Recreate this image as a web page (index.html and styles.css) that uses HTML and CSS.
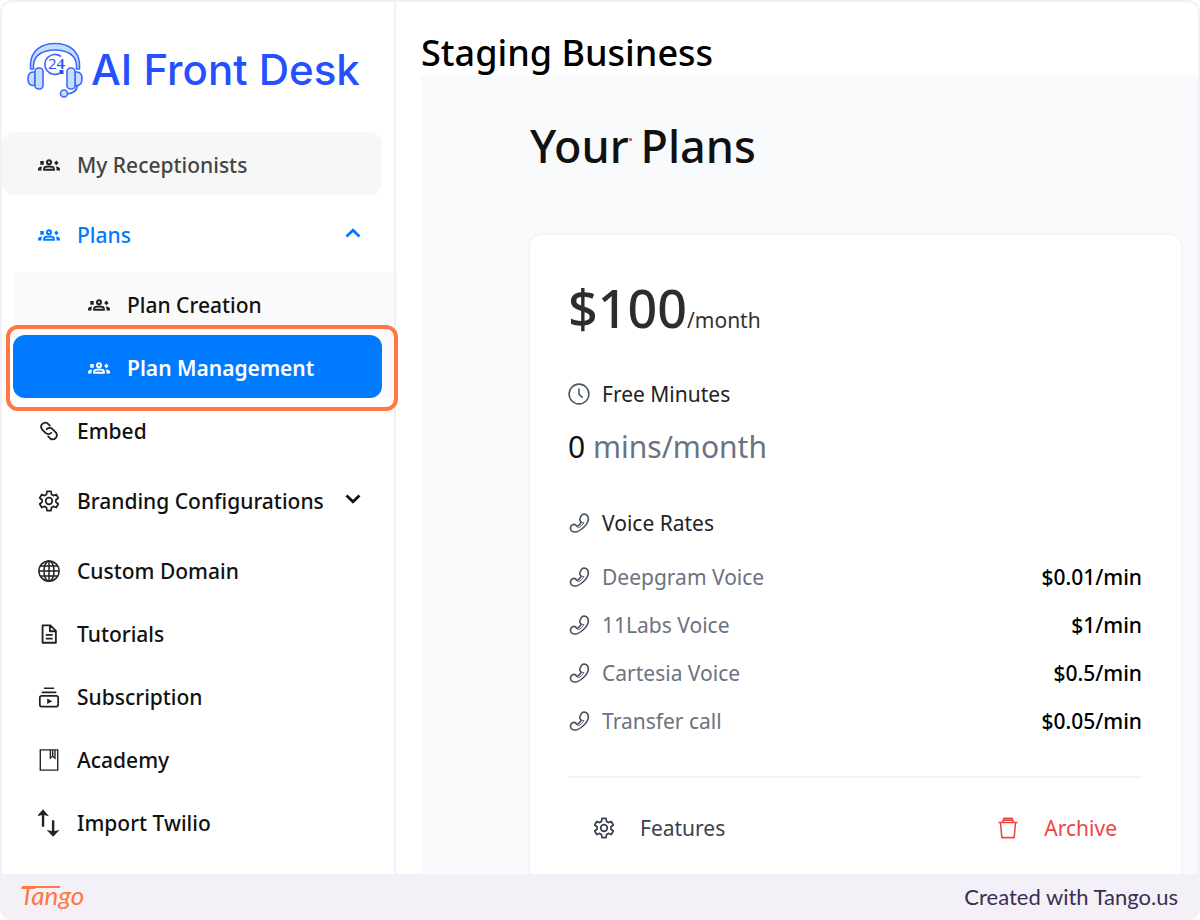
FILE: index.html
```
<!DOCTYPE html>
<html lang="en">
<head>
<meta charset="utf-8">
<meta name="viewport" content="width=device-width, initial-scale=1">
<title>AI Front Desk - Plan Management</title>
<link rel="stylesheet" href="styles.css">
</head>
<body>
<svg class="sprite" aria-hidden="true">
  <symbol id="people" viewBox="0 0 24 14">
    <circle cx="12" cy="4" r="2.200" fill="none" stroke="currentColor" stroke-width="2.200"/>
    <path d="M6.600 12.200v-1c0-1.500 2.500-2.600 5.400-2.600s5.400 1.100 5.400 2.600v1z" fill="none" stroke="currentColor" stroke-width="2"/>
    <path d="M2.500 2.500h3.800v4.300H2.500zM0 13v-1.600c0-1.500 1.600-2.700 4.800-2.800-.7.8-1 1.600-1 2.400v2z" fill="currentColor"/>
    <path d="M20 2l2.500 2.900L20 7.400l-2.400-2.500zM24 13v-1.600c0-1.500-1.600-2.700-4.800-2.800.7.8 1 1.600 1 2.400v2z" fill="currentColor"/>
  </symbol>
  <symbol id="link" viewBox="0 0 24 24">
    <g fill="none" stroke="currentColor" stroke-width="2" stroke-linecap="round" transform="rotate(90 12 12)">
      <path d="M10 14.500a4.500 4.500 0 0 1 0-6.300l3.800-3.800a4.500 4.500 0 0 1 6.300 6.300l-2.200 2.200"/>
      <path d="M14 9.500a4.500 4.500 0 0 1 0 6.300l-3.800 3.800a4.500 4.500 0 0 1-6.300-6.300l2.200-2.200"/>
    </g>
  </symbol>
  <symbol id="gear" viewBox="0 0 24 24">
    <g fill="none" stroke="currentColor" stroke-width="1.900" stroke-linejoin="round">
      <path d="M9.800 1.500h4.400l.6 3.500 1.900 1.100 3.200-1.200 2.200 3.800-2.600 2.200v2.200l2.600 2.200-2.200 3.800-3.200-1.200-1.900 1.100-.6 3.500H9.800L9.200 19l-1.900-1.100-3.200 1.200-2.200-3.800 2.600-2.200v-2.200L1.900 8.700l2.200-3.800 3.200 1.200L9.200 5z"/>
      <circle cx="12" cy="12" r="3.600"/>
    </g>
  </symbol>
  <symbol id="globe" viewBox="0 0 24 24">
    <g fill="none" stroke="currentColor" stroke-width="1.600">
      <circle cx="12" cy="12" r="11"/><ellipse cx="12" cy="12" rx="5.500" ry="11"/>
      <path d="M12 1v22M1 12h22M2.600 6.500h18.800M2.600 17.500h18.800"/>
    </g>
  </symbol>
  <symbol id="file" viewBox="0 0 24 24">
    <path d="M5 2.500h8.500l6 6V21.500H5zM13 3v6h6M8.500 13h7.500M8.500 17h7.500" fill="none" stroke="currentColor" stroke-width="2" stroke-linejoin="round"/>
  </symbol>
  <symbol id="subs" viewBox="0 0 24 24">
    <path d="M6.500 2.500h11M4 7h16" stroke="currentColor" stroke-width="1.800"/>
    <rect x="2" y="10.800" width="20" height="11.700" rx="2" fill="none" stroke="currentColor" stroke-width="1.900"/>
    <path d="M10 13.700l5.500 3-5.500 3z" fill="currentColor"/>
  </symbol>
  <symbol id="book" viewBox="0 0 24 24">
    <path d="M2.500 1h19v22h-19zM13.500 1v9l2.500-2 2.500 2V1M16 2v6" fill="none" stroke="currentColor" stroke-width="1.500"/>
  </symbol>
  <symbol id="swap" viewBox="0 0 24 30">
    <path d="M5.500 4v15M16.500 12v14" stroke="currentColor" stroke-width="2.600"/>
    <path d="M5.500 0l6.500 7.500L5.500 6-1 7.500zM16.500 30l7-7.500-7 1.500-7-1.500z" fill="currentColor"/>
  </symbol>
  <symbol id="chevron" viewBox="0 0 16 10">
    <path d="M1.500 1.500L8 7.800l6.500-6.300" fill="none" stroke="currentColor" stroke-width="2.800"/>
  </symbol>
  <symbol id="clock" viewBox="0 0 24 24">
    <path d="M12 6v6.500l4 3.500" fill="none" stroke="currentColor" stroke-width="1.700"/>
    <circle cx="12" cy="12" r="10.800" fill="none" stroke="currentColor" stroke-width="1.700"/>
  </symbol>
  <symbol id="phone" viewBox="0 0 24 24">
    <path d="M14.500 4c1.200-2.200 5-2.400 6.700 0 2 3.400.3 8.400-4 12.600-4.300 4.300-9.600 6.300-13 4.300-2.200-1.600-1.900-4.900-.2-6.300 1.700-1.300 3.800-1 5 .2l.9.900c2-.8 3.700-2.500 4.500-4.600l-.7-.8c-1.200-1.500-.6-4.300.8-6.300z" fill="none" stroke="currentColor" stroke-width="1.800" stroke-linejoin="round"/>
    <path d="M9.900 15.700l1.500 1.600c2.400-1.200 4.700-3.400 5.900-5.800l-2.400-.4" fill="none" stroke="currentColor" stroke-width="1"/>
  </symbol>
  <symbol id="trash" viewBox="0 0 24 24">
    <path d="M1.500 6h21M6 6l1.400-4.500h9.200L18 6M3.800 6l1.500 16.500h13.400L20.200 6M7 3.500h10" fill="none" stroke="currentColor" stroke-width="1.700" stroke-linejoin="round"/>
  </symbol>
</svg>

<div class="page">
  <div class="screen">
    <aside class="sidebar">
      <a class="brand" href="#">
        <svg class="brand-mark" viewBox="0 0 56 56" aria-hidden="true">
          <g fill="#c3e0fb" stroke="#3f66ff" stroke-width="1.600" stroke-linejoin="round">
            <path d="M3.500 27V22C4 9 14 1.500 28 1.500S52 9 52.500 22v5h-3v-4C49 13 40 8 28 8S7 13 6.500 23v4z"/>
            <path d="M50 43v1c0 4-4 8-11 8" fill="none" stroke-width="2"/>
            <path d="M8 30H6c-3 0-5 2-5 7s2 6.500 5 6.500h2z"/><rect x="8" y="26" width="8" height="21" rx="3.500"/>
            <path d="M48 30h2c3 0 5 2 5 7s-2 6.500-5 6.500h-2z"/><rect x="40" y="26" width="8" height="21" rx="3.500"/>
            <circle cx="37" cy="51.500" r="3.500"/>
          </g>
          <path d="M34 14.500A10 10 0 1 0 33 31M35 18v9" fill="none" stroke="#3f66ff" stroke-width="1.600"/>
          <path d="M32.500 28h4v4h-4z" fill="#2450ff"/>
          <text class="brand-24" x="21" y="27">24</text>
        </svg>
        <span class="brand-name">AI Front Desk</span>
      </a>
      <nav class="nav">
        <a class="item hovered" href="#"><svg class="icon"><use href="#people"/></svg>My Receptionists</a>
        <button class="item group open" type="button" aria-expanded="true"><svg class="icon"><use href="#people"/></svg>Plans<svg class="chevron up"><use href="#chevron"/></svg></button>
        <div class="submenu">
          <a class="item sub" href="#"><svg class="icon"><use href="#people"/></svg>Plan Creation</a>
          <a class="item sub current" href="#" aria-current="page"><svg class="icon"><use href="#people"/></svg>Plan Management</a>
        </div>
        <a class="item" href="#"><svg class="icon"><use href="#link"/></svg>Embed</a>
        <button class="item group" type="button" aria-expanded="false"><svg class="icon"><use href="#gear"/></svg>Branding Configurations<svg class="chevron"><use href="#chevron"/></svg></button>
        <a class="item" href="#"><svg class="icon"><use href="#globe"/></svg>Custom Domain</a>
        <a class="item" href="#"><svg class="icon"><use href="#file"/></svg>Tutorials</a>
        <a class="item" href="#"><svg class="icon"><use href="#subs"/></svg>Subscription</a>
        <a class="item" href="#"><svg class="icon"><use href="#book"/></svg>Academy</a>
        <a class="item" href="#"><svg class="icon tall"><use href="#swap"/></svg>Import Twilio</a>
      </nav>
    </aside>

    <main class="main">
      <h1 class="business">Staging Business</h1>
      <section class="panel">
        <h2 class="title">Your<span class="dot"></span> Plans</h2>
        <article class="card">
          <p class="price"><strong>$100</strong><span>/month</span></p>
          <h3 class="row"><svg class="icon"><use href="#clock"/></svg>Free Minutes</h3>
          <p class="minutes">0 <span>mins/month</span></p>
          <h3 class="row"><svg class="icon"><use href="#phone"/></svg>Voice Rates</h3>
          <ul class="rates">
            <li class="row"><svg class="icon"><use href="#phone"/></svg>Deepgram Voice<b>$0.01/min</b></li>
            <li class="row"><svg class="icon"><use href="#phone"/></svg>11Labs Voice<b>$1/min</b></li>
            <li class="row"><svg class="icon"><use href="#phone"/></svg>Cartesia Voice<b>$0.5/min</b></li>
            <li class="row"><svg class="icon"><use href="#phone"/></svg>Transfer call<b>$0.05/min</b></li>
          </ul>
          <div class="actions">
            <button class="action" type="button"><svg class="icon"><use href="#gear"/></svg>Features</button>
            <button class="action danger" type="button"><svg class="icon"><use href="#trash"/></svg>Archive</button>
          </div>
        </article>
      </section>
    </main>
  </div>
  <footer class="footer">
    <svg class="tango" viewBox="0 0 72 36" role="img" aria-label="Tango">
      <path d="M2 8h38" stroke="#ff7742" stroke-width="1.800"/>
      <text x="0" y="26">Tango</text>
    </svg>
    <span class="credit">Created with Tango.us</span>
  </footer>
</div>
</body>
</html>
```

FILE: styles.css
```
* { box-sizing: border-box; }

body {
  margin: 0;
  background: #fff;
  color: #111;
  font: 400 21px/32px "Noto Sans", "Open Sans", sans-serif;
}

h1, h2, h3, p, ul { margin: 0; padding: 0; font-weight: 400; }
ul { list-style: none; }
a { color: inherit; text-decoration: none; }
button { border: 0; background: none; color: inherit; font: inherit; text-align: left; }

.sprite { position: absolute; width: 0; height: 0; }

.page {
  display: flex;
  flex-direction: column;
  height: 100vh;
  padding: 2px 2px 0;
  background: #f3f1f7;
  border-radius: 12px;
}

.screen {
  display: flex;
  flex: 1;
  min-height: 0;
  overflow: hidden;
  background: #fff;
  border-radius: 10px 10px 0 0;
}

/* Sidebar */
.sidebar {
  flex: 0 0 394px;
  border-right: 2px solid #f1f1f5;
}

.brand {
  display: flex;
  align-items: center;
  gap: 8px;
  height: 130px;
  padding: 6px 0 0 25px;
}
.brand-mark { width: 56px; height: 56px; }
.brand-24 { font: 500 15px "Open Sans", sans-serif; fill: #2450ff; }
.brand-name { color: #2450ff; font: 500 42px/48px Inter, sans-serif; }

.item {
  display: flex;
  align-items: center;
  gap: 17px;
  width: 100%;
  height: 63px;
  padding: 3px 33px 0 36px;
  font-size: 21px;
  font-weight: 500;
  white-space: nowrap;
}
.item .icon { color: #222; }
.hovered {
  width: 380px;
  background: #f7f7f7;
  border-radius: 12px;
  color: #444;
}
.group { height: 77px; }
.open, .open .icon { color: #007bff; }

.icon { flex: none; width: 22px; height: 22px; overflow: visible; }
.tall { height: 30px; }
.chevron { width: 16px; height: 10px; margin: 0 0 4px auto; }
.up { transform: rotate(180deg); }

.submenu { margin-left: 11px; background: #fafafa; }
.sub { padding-left: 75px; }
.current {
  position: relative;
  width: 369px;
  background: #007bff;
  border-radius: 12px;
  color: #fff;
  font-weight: 600;
}
.current .icon { color: #fff; }
.current::after {
  content: "";
  position: absolute;
  inset: -10px -16px -13px -7px;
  border: 4px solid #ff7742;
  border-radius: 12px;
}

/* Content */
.main {
  display: flex;
  flex: 1;
  flex-direction: column;
  min-width: 0;
  padding-left: 25px;
}
.business {
  height: 74px;
  padding-top: 27px;
  color: #000;
  font-size: 36px;
  font-weight: 500;
  line-height: 48px;
}
.panel {
  flex: 1;
  padding: 42px 17px 0 109px;
  background: #f9fafc;
}
.title { font-size: 45px; font-weight: 500; line-height: 56px; }
.dot {
  display: inline-block;
  width: 3px;
  height: 3px;
  margin-right: -3px;
  border-radius: 50%;
  background: #f33;
  vertical-align: 22px;
}

.card {
  height: 700px;
  margin-top: 61px;
  padding: 38px 39px 0 38px;
  background: #fff;
  border-radius: 12px;
  box-shadow: 0 0 4px #e9ebef;
}
.price { color: #333; line-height: 70px; }
.price strong { color: #2d2d2a; font-size: 52px; font-weight: 500; }
.row { display: flex; align-items: center; gap: 12px; font-size: 21px; }
.row .icon { color: #4b5563; }
h3.row { margin-top: 23px; color: #222; }
.minutes { margin-top: 16px; font-size: 30px; line-height: 42px; }
.minutes span { color: #6b7280; }
.minutes + h3.row { margin-top: 39px; }
.rates { display: grid; gap: 16px; margin-top: 22px; color: #6b7280; }
.rates b { margin-left: auto; color: #000; font-weight: 500; }

.actions {
  display: flex;
  justify-content: space-between;
  margin-top: 39px;
  padding: 34px 25px 0;
  border-top: 2px solid #f3f4f6;
}
.action { display: flex; align-items: center; gap: 25px; padding: 0; color: #374151; }
.danger { color: #ef4444; }

/* Footer */
.footer {
  display: flex;
  flex: 0 0 46px;
  align-items: center;
  justify-content: space-between;
  padding: 0 20px 0 18px;
}
.tango { width: 72px; height: 36px; font: italic 400 26px Lato, sans-serif; fill: #ff7742; }
.credit { color: #3c2d52; font: 400 22px/28px Lato, sans-serif; }
```
